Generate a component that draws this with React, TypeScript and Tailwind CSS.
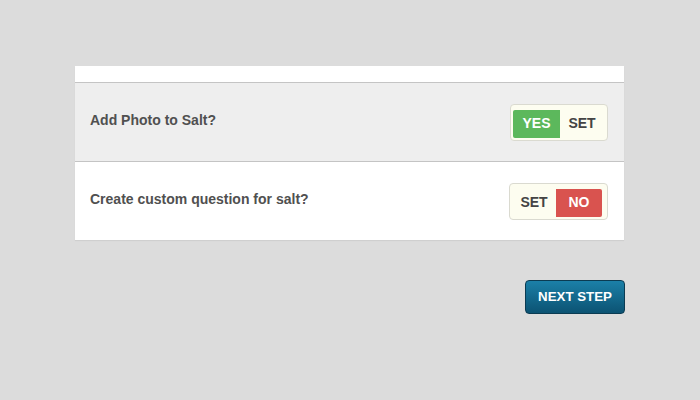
import React from "react";

export default function App() {
  return (
    <div className="w-[700px] h-[400px] bg-[#dcdcdc] pt-[66px] pl-[75px]" style={{ fontFamily: '"Liberation Sans", Arial, sans-serif' }}>
      <div className="w-[549px] bg-white shadow-[0_1px_1px_rgba(0,0,0,0.06)]">
        <div className="h-[17px] border-b border-[#c4c4c4]" />
        <div className="h-[79px] bg-[#eeeeee] border-b border-[#c4c4c4] flex items-center justify-between pl-[15px] pr-[16px]">
          <span className="text-[14px] font-bold text-[#505050] mb-[3px]">Add Photo to Salt?</span>
          <div className="w-[98px] h-[37px] rounded-[4px] border border-[#dadad0] bg-[#fdfdf0] pl-[2px] pr-[3px] pt-[5px] pb-[2px] flex">
            <div className="w-[47px] h-[28px] bg-[#5cb85c] rounded-l-[2px] flex items-center justify-center text-white text-[14px] font-bold">YES</div>
            <div className="flex-1 flex items-center justify-center text-[#444] text-[14px] font-bold">SET</div>
          </div>
        </div>
        <div className="h-[78px] flex items-center justify-between pl-[15px] pr-[16px]">
          <span className="text-[14px] font-bold text-[#505050] mb-[3px]">Create custom question for salt?</span>
          <div className="w-[99px] h-[37px] rounded-[4px] border border-[#dadad0] bg-[#fdfdf0] pl-[2px] pr-[5px] pt-[5px] pb-[2px] flex">
            <div className="flex-1 flex items-center justify-center text-[#444] text-[14px] font-bold">SET</div>
            <div className="w-[46px] h-[28px] bg-[#d9534f] rounded-r-[2px] flex items-center justify-center text-white text-[14px] font-bold">NO</div>
          </div>
        </div>
      </div>
      <div className="w-[550px] flex justify-end mt-[40px]">
        <button className="w-[100px] h-[34px] rounded-[4px] border border-[#0b3b52] bg-gradient-to-b from-[#1b80a8] to-[#0c5373] text-white text-[13.3px] font-bold">NEXT STEP</button>
      </div>
    </div>
  );
}
